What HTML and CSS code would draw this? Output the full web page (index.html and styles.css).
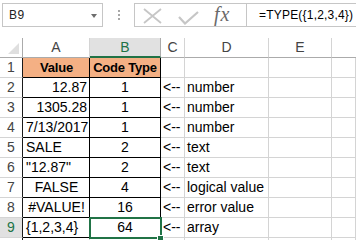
FILE: index.html
```html
<!DOCTYPE html>
<html>
<head>
<meta charset="utf-8">
<link rel="stylesheet" href="styles.css">
</head>
<body>
<div class="app">
  <div class="fbar">
    <div class="namebox"><span>B9</span><span class="arrow"></span></div>
    <div class="grip"><i></i><i></i><i></i></div>
    <div class="fbtns">
      <svg class="ic-x" width="19" height="16" viewBox="0 0 19 16"><path d="M1 1 L18 15 M18 1 L1 15" stroke="#c6c6c6" stroke-width="1.8" fill="none"/></svg>
      <svg class="ic-ok" width="21" height="14" viewBox="0 0 21 14"><path d="M1 6 L7 12.5 L20 1" stroke="#c6c6c6" stroke-width="2.2" fill="none"/></svg>
      <span class="fx">fx</span>
    </div>
    <div class="finput">=TYPE({1,2,3,4})</div>
  </div>
  <div class="sheet">
    <div class="corner"><span class="tri"></span></div>
    <div class="ch">A</div><div class="ch sel-h">B</div><div class="ch">C</div><div class="ch">D</div><div class="ch">E</div><div class="ch last"></div>

    <div class="rh">1</div><div class="c t hd a">Value</div><div class="c t hd">Code Type</div><div class="c"></div><div class="c"></div><div class="c"></div><div class="c"></div>

    <div class="rh">2</div><div class="c t a r">12.87</div><div class="c t m">1</div><div class="c">&lt;--</div><div class="c">number</div><div class="c"></div><div class="c"></div>
    <div class="rh">3</div><div class="c t a r">1305.28</div><div class="c t m">1</div><div class="c">&lt;--</div><div class="c">number</div><div class="c"></div><div class="c"></div>
    <div class="rh">4</div><div class="c t a r">7/13/2017</div><div class="c t m">1</div><div class="c">&lt;--</div><div class="c">number</div><div class="c"></div><div class="c"></div>
    <div class="rh">5</div><div class="c t a">SALE</div><div class="c t m">2</div><div class="c">&lt;--</div><div class="c">text</div><div class="c"></div><div class="c"></div>
    <div class="rh">6</div><div class="c t a">"12.87"</div><div class="c t m">2</div><div class="c">&lt;--</div><div class="c">text</div><div class="c"></div><div class="c"></div>
    <div class="rh">7</div><div class="c t a m">FALSE</div><div class="c t m">4</div><div class="c">&lt;--</div><div class="c">logical value</div><div class="c"></div><div class="c"></div>
    <div class="rh">8</div><div class="c t a m">#VALUE!</div><div class="c t m">16</div><div class="c">&lt;--</div><div class="c">error value</div><div class="c"></div><div class="c"></div>
    <div class="rh sel-r">9</div><div class="c t a">{1,2,3,4}</div><div class="c t m active">64<span class="sel"><span class="handle"></span></span></div><div class="c">&lt;--</div><div class="c">array</div><div class="c"></div><div class="c"></div>
    <div class="rh"></div><div class="c"></div><div class="c"></div><div class="c"></div><div class="c"></div><div class="c"></div><div class="c"></div>
  </div>
</div>
</body>
</html>
```

FILE: styles.css
```css
html, body {
  margin: 0;
  padding: 0;
  background: #ffffff;
  overflow: hidden;
}
.app {
  width: 356px;
  height: 240px;
  overflow: hidden;
  font-family: "Liberation Sans", Arial, sans-serif;
  color: #000;
}
.fbar {
  display: flex;
  height: 24px;
  margin-top: 3px;
  padding-left: 2px;
}
.namebox {
  width: 101px;
  box-sizing: border-box;
  border: 1px solid #c6c6c6;
  display: flex;
  align-items: center;
  justify-content: space-between;
  padding: 0 5px 0 6px;
  font-size: 12px;
  letter-spacing: 0.5px;
  color: #222;
}
.arrow {
  width: 0;
  height: 0;
  border-left: 3.5px solid transparent;
  border-right: 3.5px solid transparent;
  border-top: 4px solid #6d6d6d;
  margin-top: 1px;
}
.grip {
  width: 31px;
  display: flex;
  flex-direction: column;
  align-items: center;
  justify-content: center;
  gap: 2px;
}
.grip i {
  display: block;
  width: 2px;
  height: 2px;
  background: #a8a8a8;
}
.fbtns {
  width: 113px;
  box-sizing: border-box;
  border: 1px solid #c6c6c6;
  display: flex;
  align-items: center;
  padding-left: 8px;
}
.ic-x {
  margin-top: 1px;
}
.ic-ok {
  margin-left: 16px;
  margin-top: 6px;
}
.fx {
  margin-left: 15px;
  font-family: "Liberation Serif", "Times New Roman", serif;
  font-style: italic;
  font-size: 20px;
  letter-spacing: 1px;
  color: #6a6a6a;
  line-height: 20px;
  margin-top: -2px;
}
.finput {
  flex: 1;
  box-sizing: border-box;
  border-top: 1px solid #c6c6c6;
  border-bottom: 1px solid #c6c6c6;
  padding-left: 12px;
  font-size: 12px;
  letter-spacing: 0.2px;
  line-height: 22px;
  color: #000;
  white-space: nowrap;
}
.sheet {
  margin-top: 11px;
  display: grid;
  grid-template-columns: 23px 67px 71px 24px 84px 63px 24px;
  grid-auto-rows: 20px;
  font-size: 14px;
  line-height: 19px;
}
.sheet > div {
  box-sizing: border-box;
  white-space: nowrap;
  overflow: visible;
}
.corner {
  border-right: 1px solid #ababab;
  border-bottom: 1px solid #ababab;
  position: relative;
}
.tri {
  position: absolute;
  right: 3px;
  bottom: 3px;
  width: 0;
  height: 0;
  border-left: 11px solid transparent;
  border-bottom: 11px solid #dfdfdf;
}
.ch {
  text-align: center;
  color: #444;
  border-right: 1px solid #d4d4d4;
  border-bottom: 1px solid #ababab;
}
.ch.last {
  border-right: none;
}
.ch.sel-h {
  background: #e1e1e1;
  color: #217346;
  border-bottom: 2px solid #217346;
  border-right-color: #ababab;
}
.rh {
  text-align: center;
  color: #444;
  border-right: 1px solid #1a1a1a;
  border-bottom: 1px solid #d4d4d4;
}
.rh.sel-r {
  background: #e1e1e1;
  color: #217346;
}
.c {
  border-right: 1px solid #d4d4d4;
  border-bottom: 1px solid #d4d4d4;
  padding: 0 2px;
}
.c.t {
  border-right-color: #000;
  border-bottom-color: #000;
}
.c.a {
  padding-left: 3px;
}
.c.r {
  text-align: right;
  padding-right: 2px;
}
.c.m {
  text-align: center;
}
.c.hd {
  background: #f4b084;
  font-weight: bold;
  font-size: 13px;
  text-align: center;
  letter-spacing: -0.2px;
}
.active {
  position: relative;
}
.sel {
  position: absolute;
  left: -1px;
  top: -1px;
  width: 73px;
  height: 22px;
  box-sizing: border-box;
  border: 2px solid #217346;
}
.handle {
  position: absolute;
  left: 66px;
  top: 16px;
  width: 5px;
  height: 5px;
  background: #217346;
  border: 1px solid #fff;
}
```
